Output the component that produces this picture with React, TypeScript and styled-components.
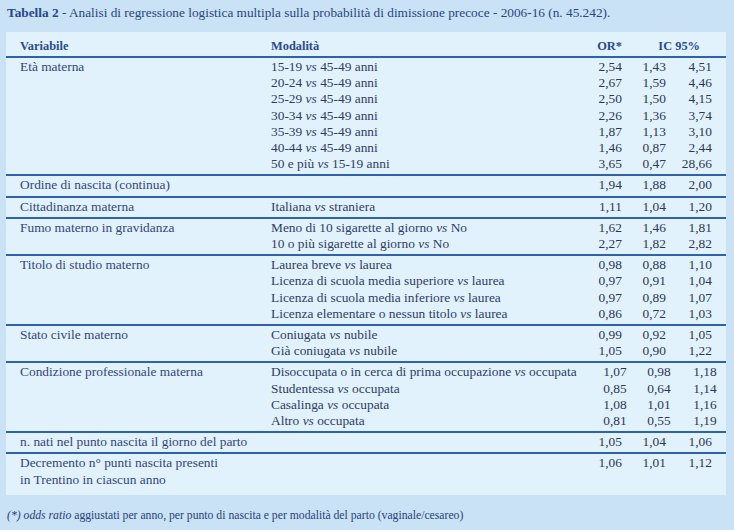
import React from "react";
import styled, { createGlobalStyle } from "styled-components";

const SERIF = `"Liberation Serif", "Times New Roman", serif`;

const Global = createGlobalStyle`
  html, body { margin: 0; padding: 0; }
  body {
    background: #c9e2f5;
    font-family: "Liberation Serif", "Times New Roman", serif;
    color: #2f3d6a;
  }
`;

const Page = styled.div`
  width: 734px;
  height: 530px;
  box-sizing: border-box;
  padding: 4px 8px 0 6px;
  display: flex;
  flex-direction: column;
  font-family: ${SERIF};
`;

const Title = styled.div`
  font-size: 13.3px;
  line-height: 17px;
  color: #2a4680;
  padding-left: 1px;
  height: 28px;
  white-space: nowrap;
`;

const Strong = styled.b`
  font-weight: bold;
  color: #27478a;
`;

const Panel = styled.div`
  width: 720px;
  background: #e1f2fc;
  box-sizing: border-box;
  padding: 0 14px 5px 14px;
`;

const COLS = "251px 1fr 50px 44px 46px";

const HeaderRow = styled.div`
  display: grid;
  grid-template-columns: ${COLS};
  margin: 0 -14px;
  padding: 6px 14px 2px 14px;
  border-bottom: 2px solid #2f62ad;
  font-weight: bold;
  font-size: 12.4px;
  line-height: 16px;
  color: #2b4b8a;
`;

const HeadCell = styled.div<{ $align?: string; $span?: number; $pr?: number }>`
  text-align: ${(p) => p.$align || "left"};
  grid-column: span ${(p) => p.$span || 1};
  padding-right: ${(p) => p.$pr || 0}px;
  white-space: nowrap;
`;

const Group = styled.div<{ $first?: boolean }>`
  display: grid;
  grid-template-columns: ${COLS};
  margin: 0 -14px;
  padding: 1px 14px 2px 14px;
  border-top: ${(p) => (p.$first ? "none" : "2px solid #2f62ad")};
  font-size: 13.4px;
  line-height: 16.2px;
`;

const VarCell = styled.div<{ $rows: number }>`
  grid-column: 1;
  grid-row: 1 / span ${(p) => p.$rows};
  color: #34457a;
`;

const ModCell = styled.div`
  grid-column: 2;
  white-space: nowrap;
  color: #2f3c66;
`;

const Num = styled.div<{ $col: number }>`
  grid-column: ${(p) => p.$col};
  text-align: right;
  color: #2d3656;
  white-space: nowrap;
`;

const Vs = styled.i`
  font-style: italic;
`;

const Footnote = styled.div`
  margin-top: 13px;
  font-size: 11.7px;
  line-height: 15px;
  color: #2a3f78;
  padding-left: 1px;
`;

type Row = { m: React.ReactNode; v: [string, string, string] };
type G = { label: React.ReactNode; rows: Row[] };

const vs = (a: string, b: string) => (
  <>
    {a} <Vs>vs</Vs> {b}
  </>
);

const groups: G[] = [
  {
    label: "Età materna",
    rows: [
      { m: vs("15-19", "45-49 anni"), v: ["2,54", "1,43", "4,51"] },
      { m: vs("20-24", "45-49 anni"), v: ["2,67", "1,59", "4,46"] },
      { m: vs("25-29", "45-49 anni"), v: ["2,50", "1,50", "4,15"] },
      { m: vs("30-34", "45-49 anni"), v: ["2,26", "1,36", "3,74"] },
      { m: vs("35-39", "45-49 anni"), v: ["1,87", "1,13", "3,10"] },
      { m: vs("40-44", "45-49 anni"), v: ["1,46", "0,87", "2,44"] },
      { m: vs("50 e più", "15-19 anni"), v: ["3,65", "0,47", "28,66"] },
    ],
  },
  {
    label: "Ordine di nascita (continua)",
    rows: [{ m: "", v: ["1,94", "1,88", "2,00"] }],
  },
  {
    label: "Cittadinanza materna",
    rows: [{ m: vs("Italiana", "straniera"), v: ["1,11", "1,04", "1,20"] }],
  },
  {
    label: "Fumo materno in gravidanza",
    rows: [
      { m: vs("Meno di 10 sigarette al giorno", "No"), v: ["1,62", "1,46", "1,81"] },
      { m: vs("10 o più sigarette al giorno", "No"), v: ["2,27", "1,82", "2,82"] },
    ],
  },
  {
    label: "Titolo di studio materno",
    rows: [
      { m: vs("Laurea breve", " laurea"), v: ["0,98", "0,88", "1,10"] },
      { m: vs("Licenza di scuola media superiore", " laurea"), v: ["0,97", "0,91", "1,04"] },
      { m: vs("Licenza di scuola media inferiore", " laurea"), v: ["0,97", "0,89", "1,07"] },
      { m: vs("Licenza elementare o nessun titolo", "laurea"), v: ["0,86", "0,72", "1,03"] },
    ],
  },
  {
    label: "Stato civile materno",
    rows: [
      { m: vs("Coniugata", "nubile"), v: ["0,99", "0,92", "1,05"] },
      { m: vs("Già coniugata", "nubile"), v: ["1,05", "0,90", "1,22"] },
    ],
  },
  {
    label: "Condizione professionale materna",
    rows: [
      { m: vs("Disoccupata o in cerca di prima occupazione", "occupata"), v: ["1,07", "0,98", "1,18"] },
      { m: vs("Studentessa", "occupata"), v: ["0,85", "0,64", "1,14"] },
      { m: vs("Casalinga", "occupata"), v: ["1,08", "1,01", "1,16"] },
      { m: vs("Altro", "occupata"), v: ["0,81", "0,55", "1,19"] },
    ],
  },
  {
    label: "n. nati nel punto nascita il giorno del parto",
    rows: [{ m: "", v: ["1,05", "1,04", "1,06"] }],
  },
  {
    label: (
      <>
        Decremento n° punti nascita presenti
        <br />
        in Trentino in ciascun anno
      </>
    ),
    rows: [{ m: "", v: ["1,06", "1,01", "1,12"] }],
  },
];

export default function App() {
  return (
    <Page>
      <Global />
      <Title>
        <Strong>Tabella 2</Strong> - Analisi di regressione logistica multipla sulla probabilità di
        dimissione precoce - 2006-16 (n. 45.242).
      </Title>
      <Panel>
        <HeaderRow>
          <HeadCell>Variabile</HeadCell>
          <HeadCell>Modalità</HeadCell>
          <HeadCell $align="right">OR*</HeadCell>
          <HeadCell $align="right" $span={2} $pr={12}>
            IC 95%
          </HeadCell>
        </HeaderRow>
        {groups.map((g, gi) => (
          <Group key={gi} $first={gi === 0}>
            <VarCell $rows={g.rows.length}>{g.label}</VarCell>
            {g.rows.map((r, ri) => (
              <React.Fragment key={ri}>
                <ModCell style={{ gridRow: ri + 1 }}>{r.m}</ModCell>
                <Num $col={3} style={{ gridRow: ri + 1 }}>
                  {r.v[0]}
                </Num>
                <Num $col={4} style={{ gridRow: ri + 1 }}>
                  {r.v[1]}
                </Num>
                <Num $col={5} style={{ gridRow: ri + 1 }}>
                  {r.v[2]}
                </Num>
              </React.Fragment>
            ))}
          </Group>
        ))}
      </Panel>
      <Footnote>
        <Vs>(*) odds ratio</Vs> aggiustati per anno, per punto di nascita e per modalità del parto
        (vaginale/cesareo)
      </Footnote>
    </Page>
  );
}
